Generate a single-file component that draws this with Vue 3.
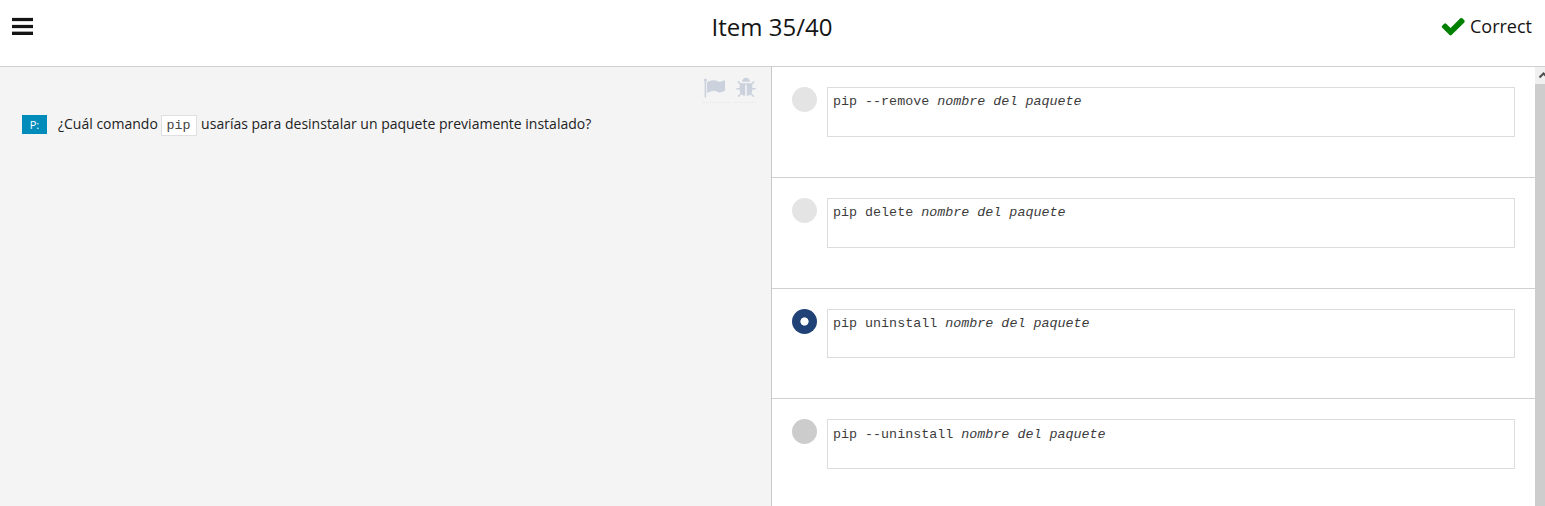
<script setup>
const answers = [
  { command: 'pip --remove', state: 'idle' },
  { command: 'pip delete', state: 'idle' },
  { command: 'pip uninstall', state: 'selected' },
  { command: 'pip --uninstall', state: 'hover' },
]
</script>

<template>
  <div class="quiz">
    <header class="topbar">
      <div class="side">
        <button class="menu" aria-label="Menu"><span /><span /><span /></button>
      </div>
      <h1>Item 35/40</h1>
      <div class="side result">
        <svg class="check" viewBox="0 0 1792 1792"><path d="M1671 566q0 40-28 68l-724 724-136 136q-28 28-68 28t-68-28l-136-136-362-362q-28-28-28-68t28-68l136-136q28-28 68-28t68 28l294 295 656-657q28-28 68-28t68 28l136 136q28 28 28 68z" /></svg>
        <span>Correct</span>
      </div>
    </header>
    <main class="body">
      <section class="question">
        <div class="tools">
          <span class="tool flag"><svg viewBox="0 0 1792 1792"><path d="M320 256q0 72-64 110v1266q0 13-9.500 22.500t-22.500 9.500h-64q-13 0-22.500-9.500t-9.500-22.500v-1266q-64-38-64-110 0-53 37.500-90.500t90.500-37.500 90.500 37.500 37.500 90.500zm1472 64v763q0 25-12.500 38.500t-39.500 27.500q-215 116-369 116-61 0-123.500-22t-108.500-48-115.500-48-142.500-22q-192 0-464 146-17 9-33 9-26 0-45-19t-19-45v-742q0-32 31-55 21-14 79-43 236-120 421-120 107 0 200 29t219 88q38 19 88 19 54 0 117.500-21t110-47 88-47 54.500-21q26 0 45 19t19 45z" /></svg></span>
          <span class="tool"><svg viewBox="0 0 1792 1792"><path d="M1696 960q0 26-19 45t-45 19h-224q0 171-67 290l208 209q19 19 19 45t-19 45q-18 19-45 19t-45-19l-198-197q-5 5-15 13t-42 28.500-65 36.500-82 29-97 13v-896h-128v896q-51 0-101.500-13.500t-87-33-66-39-43.500-32.500l-15-14-183 207q-20 21-48 21-24 0-43-16-19-18-20.500-44.500t15.500-46.500l202-227q-58-114-58-274h-224q-26 0-45-19t-19-45 19-45 45-19h224v-294l-173-173q-19-19-19-45t19-45 45-19 45 19l173 173h844l173-173q19-19 45-19t45 19 19 45-19 45l-173 173v294h224q26 0 45 19t19 45zm-480-576h-640q0-133 93.500-226.500t226.500-93.500 226.500 93.500 93.500 226.500z" /></svg></span>
        </div>
        <div class="prompt">
          <span class="tag">P:</span>
          <p>¿Cuál comando <code>pip</code> usarías para desinstalar un paquete previamente instalado?</p>
        </div>
      </section>
      <section class="answers">
        <div class="list">
          <div v-for="a in answers" :key="a.command" class="answer">
            <span class="radio" :class="a.state" />
            <div class="box">{{ a.command }} <em>nombre del paquete</em></div>
          </div>
        </div>
        <div class="scrollbar">
          <div class="arrow"><svg viewBox="0 0 17 17"><path d="M4.500 10.500 8.500 6.500 12.500 10.500" /></svg></div>
        </div>
      </section>
    </main>
  </div>
</template>

<style>
body { margin: 0; overflow: hidden; }
</style>

<style scoped>
* { box-sizing: border-box; }
.quiz {
  width: 1545px;
  height: 506px;
  display: flex;
  flex-direction: column;
  overflow: hidden;
  background: #fff;
  color: #141414;
  font-family: "Open Sans", "Noto Sans", sans-serif;
}
.topbar {
  height: 67px;
  flex: none;
  display: flex;
  border-bottom: 1px solid #d0d0d0;
}
.side { flex: 1 1 0; padding: 0; }
.side:first-child { padding-left: 12px; }
.menu {
  display: flex;
  flex-direction: column;
  gap: 4px;
  width: 21px;
  margin: 18px 0 0;
  padding: 0;
  border: 0;
  background: none;
}
.menu span {
  height: 3px;
  width: 21px;
  background: #141414;
  box-shadow: 0 -1px #e4e4e4, 0 1px #e0e0e0;
}
.menu span:last-child { box-shadow: 0 -1px #a8a8a8; }
h1 {
  margin: 0;
  font-size: 24px;
  font-weight: 400;
  line-height: 33px;
  padding-top: 10px;
}
.side.result {
  display: flex;
  justify-content: flex-end;
  align-items: flex-start;
  padding: 14px 13px 0 0;
  font-size: 18px;
  line-height: 25px;
}
.check { width: 26.500px; height: 26.500px; margin: -1px 3.500px 0 0; fill: #008000; }
.body { flex: 1; min-height: 0; display: flex; }
.question {
  width: 772px;
  flex: none;
  background: #f4f4f4;
  border-right: 1px solid #c8c8c8;
}
.tools {
  display: flex;
  justify-content: flex-end;
  gap: 4px;
  padding: 10px 14px 0 0;
}
.tool { height: 26px; border-bottom: 1px dotted #e6e6e6; }
.flag { width: 28px; }
.tool svg { display: block; width: 22px; height: 22px; fill: #cbd2de; }
.prompt {
  display: flex;
  align-items: flex-start;
  padding: 10px 0 0 22px;
}
.tag {
  width: 25px;
  height: 19px;
  margin: 2px 11px 0 0;
  background: #008cba;
  color: #fff;
  font-size: 11px;
  line-height: 20px;
  text-align: center;
}
p { margin: 0; font-size: 14px; line-height: 22px; color: #222; white-space: nowrap; }
code {
  display: inline-block;
  height: 21px;
  padding: 0 6px 0 4px;
  border: 1px solid #dfdfdf;
  background: #fff;
  color: #444;
  font: 13.330px/20px "Liberation Mono", monospace;
}
.answers { flex: 1; min-width: 0; display: flex; }
.list { flex: 1; min-width: 0; }
.answer {
  height: 111px;
  display: flex;
  align-items: flex-start;
  gap: 10px;
  padding: 20px 20px 0;
  border-bottom: 1px solid #d0d0d0;
}
.radio {
  width: 25px;
  height: 25px;
  flex: none;
  border-radius: 50%;
  background: #e4e4e4;
}
.radio.hover { background: #ccc; }
.radio.selected { background: radial-gradient(circle, #fff 3.700px, #204276 4.500px); }
.box {
  flex: 1;
  height: 50px;
  padding: 4px 5px;
  border: 1px solid #dcdcdc;
  color: #3c3c3c;
  font: 13.360px/20px "Liberation Mono", monospace;
}
.answer:nth-child(3) { height: 110px; }
.answer:nth-child(3) .box { height: 49px; }
.answer:nth-child(4) .box { padding-top: 5px; }
.scrollbar { width: 10px; flex: none; background: #cdcdcd; overflow: hidden; }
.arrow { height: 17px; background: #f0f0f0; }
.arrow svg { display: block; width: 17px; height: 17px; fill: none; stroke: #505050; stroke-width: 2; }
</style>
